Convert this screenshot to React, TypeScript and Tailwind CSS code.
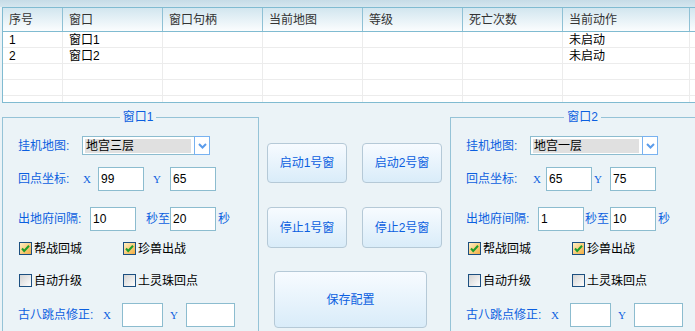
const headerCols = [
  { label: "序号", w: "w-[60px]" },
  { label: "窗口", w: "w-[100px]" },
  { label: "窗口句柄", w: "w-[100px]" },
  { label: "当前地图", w: "w-[100px]" },
  { label: "等级", w: "w-[100px]" },
  { label: "死亡次数", w: "w-[100px]" },
  { label: "当前动作", w: "w-[127px]" },
];

const rows = [
  ["1", "窗口1", "", "", "", "", "未启动"],
  ["2", "窗口2", "", "", "", "", "未启动"],
  ["", "", "", "", "", "", ""],
  ["", "", "", "", "", "", ""],
  ["", "", "", "", "", "", ""],
];

interface GroupLayout {
  title: string;
  map: string;
  x: string;
  y: string;
  interval1: string;
  interval2: string;
  fieldset: string;
  row2Label: string;
  row2X: string;
  row2Y: string;
  row3Mid: string;
  checkMl: string;
}

const groups: GroupLayout[] = [
  {
    title: "窗口1",
    map: "地宫三层",
    x: "99",
    y: "65",
    interval1: "10",
    interval2: "20",
    fieldset: "ml-[2px] w-[257px]",
    row2Label: "w-[65px]",
    row2X: "w-[15px]",
    row2Y: "w-[26px] pl-[9px]",
    row3Mid: "w-[34px] pl-[10px]",
    checkMl: "ml-[1px]",
  },
  {
    title: "窗口2",
    map: "地宫一层",
    x: "65",
    y: "75",
    interval1: "1",
    interval2: "10",
    fieldset: "w-[250px]",
    row2Label: "w-[67px]",
    row2X: "w-[13px]",
    row2Y: "w-[18px] pl-[2px]",
    row3Mid: "w-[26px] pl-[1px]",
    checkMl: "ml-[2px]",
  },
];

function CheckBox({ checked }: { checked: boolean }) {
  return (
    <svg width="13" height="13" viewBox="0 0 13 13" className="shrink-0">
      <defs>
        <linearGradient id="chk-on" x1="0" y1="0" x2="1" y2="1">
          <stop offset="0" stopColor="#fff3c8" />
          <stop offset="1" stopColor="#f2a93c" />
        </linearGradient>
        <linearGradient id="chk-off" x1="0" y1="0" x2="1" y2="1">
          <stop offset="0" stopColor="#d2d2d2" />
          <stop offset="1" stopColor="#ffffff" />
        </linearGradient>
      </defs>
      <rect x="0.5" y="0.5" width="12" height="12" fill={checked ? "url(#chk-on)" : "url(#chk-off)"} stroke="#1c4f80" />
      {checked && <path d="M3 6.5 L5.2 9 L10 3.8" fill="none" stroke="#1e9e2a" strokeWidth="2" />}
    </svg>
  );
}

function TextBox({ value, w }: { value: string; w: string }) {
  return (
    <div className={`${w} flex h-[24px] items-center border border-[#8cbccf] bg-white pl-[2px] text-[12px] text-black`}>
      {value}
    </div>
  );
}

function Label({ children, w }: { children: React.ReactNode; w: string }) {
  return <div className={`${w} shrink-0 text-[12px] text-[#0b5fe0]`}>{children}</div>;
}

function Axis({ children, w }: { children: React.ReactNode; w: string }) {
  return (
    <div className={`${w} shrink-0 font-['Liberation_Serif',serif] text-[11px] text-[#0b5fe0]`}>{children}</div>
  );
}

function Group({ g }: { g: GroupLayout }) {
  return (
    <fieldset className={`${g.fieldset} mt-[7px] h-[240px] shrink-0 border border-[#95c3d7] pl-[15px]`}>
      <legend className="mx-auto px-[3px] text-[12px] leading-[14px] text-[#0b5fe0]">{g.title}</legend>

      <div className="mt-[12px] flex h-[19px] items-center">
        <Label w="w-[64px]">挂机地图:</Label>
        <div className="flex h-[19px] w-[128px]">
          <div className="flex flex-1 items-center border-y border-l border-[#8cbccf] bg-white pl-[2px] pr-[3px]">
            <div className="flex h-[14px] flex-1 items-center bg-[#e0e0e0] pl-[1px] text-[12px] text-black">{g.map}</div>
          </div>
          <div className="flex w-[16px] items-center justify-center border border-[#78b2f0] bg-white">
            <svg width="9" height="6" viewBox="0 0 9 6">
              <path d="M1 1 L4.5 4.5 L8 1" fill="none" stroke="#5b9ceb" strokeWidth="2" />
            </svg>
          </div>
        </div>
      </div>

      <div className="mt-[12px] flex h-[24px] items-center">
        <Label w={g.row2Label}>回点坐标:</Label>
        <Axis w={g.row2X}>X</Axis>
        <TextBox value={g.x} w="w-[46px]" />
        <div className={`${g.row2Y} shrink-0`}>
          <Axis w="w-auto">Y</Axis>
        </div>
        <TextBox value={g.y} w="w-[46px]" />
      </div>

      <div className="mt-[16px] flex h-[24px] items-center">
        <Label w="w-[72px]">出地府间隔:</Label>
        <TextBox value={g.interval1} w="w-[46px]" />
        <div className={`${g.row3Mid} shrink-0 text-[12px] text-[#0b5fe0]`}>秒至</div>
        <TextBox value={g.interval2} w="w-[46px]" />
        <div className="ml-[2px] text-[12px] text-[#0b5fe0]">秒</div>
      </div>

      <div className={`${g.checkMl} mt-[11px] flex h-[13px] items-center text-[12px] text-black`}>
        <div className="flex w-[104px] items-center gap-[2px]">
          <CheckBox checked />
          <span>帮战回城</span>
        </div>
        <div className="flex items-center gap-[2px]">
          <CheckBox checked />
          <span>珍兽出战</span>
        </div>
      </div>

      <div className={`${g.checkMl} mt-[19px] flex h-[13px] items-center text-[12px] text-black`}>
        <div className="flex w-[104px] items-center gap-[2px]">
          <CheckBox checked={false} />
          <span>自动升级</span>
        </div>
        <div className="flex items-center gap-[2px]">
          <CheckBox checked={false} />
          <span>土灵珠回点</span>
        </div>
      </div>

      <div className="mt-[16px] flex h-[24px] items-center">
        <Label w="w-[85px]">古八跳点修正:</Label>
        <Axis w="w-[19px]">X</Axis>
        <TextBox value="" w="w-[41px]" />
        <div className="w-[23px] shrink-0 pl-[7px]">
          <Axis w="w-auto">Y</Axis>
        </div>
        <TextBox value="" w="w-[49px]" />
      </div>
    </fieldset>
  );
}

function Button({ label, w, h }: { label: string; w: string; h: string }) {
  return (
    <button
      className={`${w} ${h} rounded-[4px] border border-[#b5c9d7] bg-gradient-to-b from-[#f7fbff] to-[#d9ecf9] text-[12px] text-[#0b5fe0]`}
    >
      {label}
    </button>
  );
}

export default function App() {
  return (
    <div className="h-[331px] w-[695px] overflow-hidden bg-[#ebf3f7] font-['Liberation_Sans','Noto_Sans_CJK_SC',sans-serif]">
      <div className="h-[7px] bg-gradient-to-b from-[#c6dce7] to-[#d5e6ef]" />

      <div className="ml-[2px] h-[96px] w-[720px] overflow-hidden border border-[#80bbd1] bg-white">
        <div className="flex h-[24px] border-b border-[#80bbd1] bg-gradient-to-b from-[#d2e6ef] to-[#fbfdfe]">
          {headerCols.map((c) => (
            <div key={c.label} className={`${c.w} flex shrink-0 items-center border-r border-[#8fc1d5] pl-[6px] text-[12px] text-[#333]`}>
              {c.label}
            </div>
          ))}
        </div>
        {rows.map((r, i) => (
          <div key={i} className="flex h-[16px] border-b border-[#ececec]">
            {r.map((cell, j) => (
              <div
                key={j}
                className={`${headerCols[j].w} flex shrink-0 items-center border-r border-[#ececec] pl-[6px] text-[12px] leading-none text-black`}
              >
                {cell}
              </div>
            ))}
          </div>
        ))}
      </div>

      <div className="flex items-start">
        <Group g={groups[0]} />

        <div className="w-[191px] shrink-0 pt-[40px]">
          <div className="ml-[8px] flex gap-[15px]">
            <Button label="启动1号窗" w="w-[80px]" h="h-[40px]" />
            <Button label="启动2号窗" w="w-[80px]" h="h-[40px]" />
          </div>
          <div className="ml-[8px] mt-[24px] flex gap-[15px]">
            <Button label="停止1号窗" w="w-[80px]" h="h-[41px]" />
            <Button label="停止2号窗" w="w-[80px]" h="h-[41px]" />
          </div>
          <div className="ml-[15px] mt-[23px]">
            <Button label="保存配置" w="w-[153px]" h="h-[57px]" />
          </div>
        </div>

        <Group g={groups[1]} />
      </div>
    </div>
  );
}
